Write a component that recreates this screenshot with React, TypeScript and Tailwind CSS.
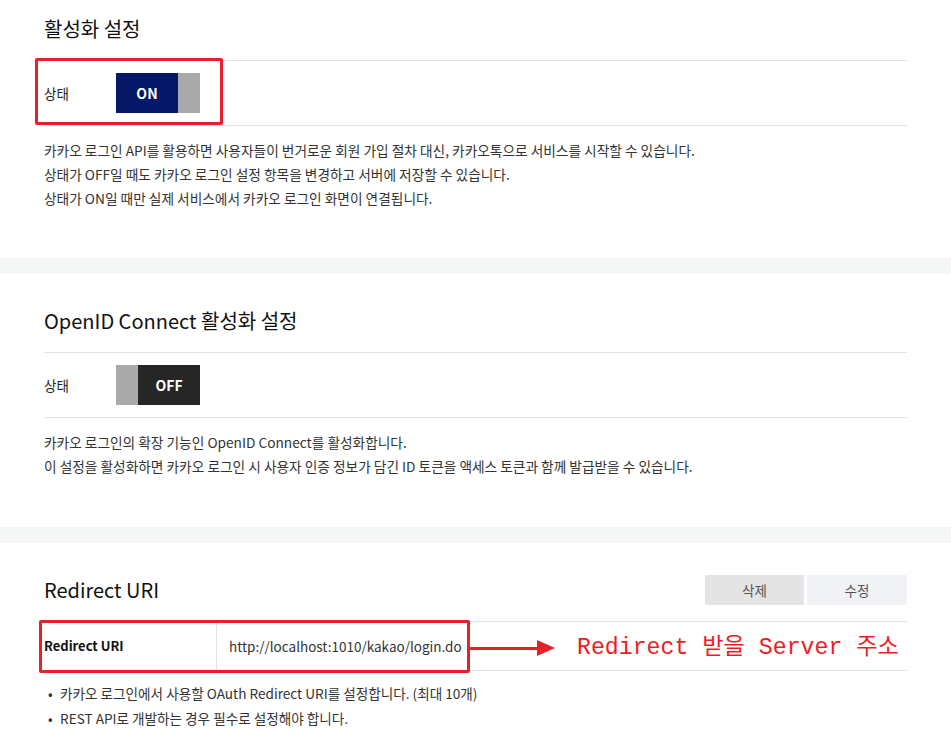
import React from 'react';

const font = { fontFamily: '"Noto Sans CJK KR", "Noto Sans", sans-serif' };

function Toggle({ on }: { on: boolean }) {
  if (on) {
    return (
      <div className="flex h-[40px] w-[84px]">
        <div className="flex w-[62px] items-center justify-center bg-[#051766] text-[14px] font-bold text-white">ON</div>
        <div className="w-[22px] bg-[#aaaaaa]" />
      </div>
    );
  }
  return (
    <div className="flex h-[40px] w-[84px]">
      <div className="w-[22px] bg-[#aaaaaa]" />
      <div className="flex w-[62px] items-center justify-center bg-[#262626] text-[14px] font-bold text-white">OFF</div>
    </div>
  );
}

function StatusRow({ on, marked }: { on: boolean; marked?: boolean }) {
  return (
    <div className="relative flex h-[66px] items-center border-y border-[#e2e2e2]">
      <div className="w-[72px] text-[13.5px] text-[#222]">상태</div>
      <Toggle on={on} />
      {marked && (
        <div className="absolute left-[-9px] top-[-3px] h-[67px] w-[188px] rounded-[2px] border-[3px] border-[#e8202a]" />
      )}
    </div>
  );
}

function Band() {
  return <div className="h-[16px] bg-[#f5f6f6]" />;
}

export default function App() {
  return (
    <div className="w-[951px] bg-white text-[#333]" style={font}>
      <section className="px-[44px] pb-[48px] pt-[14px]">
        <h2 className="mb-[16px] h-[30px] text-[20px] leading-[30px] text-[#111]">활성화 설정</h2>
        <StatusRow on marked />
        <div className="mt-[12px] text-[13.7px] leading-[24px] text-[#333]">
          <p>카카오 로그인 API를 활용하면 사용자들이 번거로운 회원 가입 절차 대신, 카카오톡으로 서비스를 시작할 수 있습니다.</p>
          <p>상태가 OFF일 때도 카카오 로그인 설정 항목을 변경하고 서버에 저장할 수 있습니다.</p>
          <p>상태가 ON일 때만 실제 서비스에서 카카오 로그인 화면이 연결됩니다.</p>
        </div>
      </section>
      <Band />
      <section className="px-[44px] pb-[49px] pt-[32px]">
        <h2 className="mb-[16px] h-[30px] text-[20px] leading-[30px] text-[#111]">OpenID Connect 활성화 설정</h2>
        <StatusRow on={false} />
        <div className="mt-[12px] text-[13.7px] leading-[24px] text-[#333]">
          <p>카카오 로그인의 확장 기능인 OpenID Connect를 활성화합니다.</p>
          <p>이 설정을 활성화하면 카카오 로그인 시 사용자 인증 정보가 담긴 ID 토큰을 액세스 토큰과 함께 발급받을 수 있습니다.</p>
        </div>
      </section>
      <Band />
      <section className="px-[44px] pb-[20px] pt-[32px]">
        <div className="mb-[16px] flex h-[30px] items-center justify-between">
          <h2 className="text-[20px] leading-[30px] text-[#111]">Redirect URI</h2>
          <div className="flex gap-[3px] text-[13.5px] text-[#555]">
            <button className="h-[30px] w-[99px] bg-[#e4e4e4]">삭제</button>
            <button className="h-[30px] w-[100px] bg-[#f0f2f6]">수정</button>
          </div>
        </div>
        <div className="relative flex h-[50px] items-center border-y border-[#e2e2e2]">
          <div className="flex h-full w-[173px] items-center border-r border-[#e2e2e2] text-[13px] font-bold text-[#111]">Redirect URI</div>
          <div className="pl-[12px] text-[13.5px] text-[#333]">http://localhost:1010/kakao/login.do</div>
          <div className="absolute left-[-5px] top-[-2px] h-[53px] w-[431px] rounded-[2px] border-[3px] border-[#e8202a]" />
          <div className="absolute left-[425px] top-[18px] flex items-center">
            <div className="h-[3px] w-[68px] bg-[#e8202a]" />
            <svg width="18" height="16" viewBox="0 0 18 16">
              <path d="M0 0 L18 8 L0 16 Z" fill="#e8202a" />
            </svg>
          </div>
          <div
            className="absolute left-[533px] top-[11px] text-[23.2px] leading-[30px] text-[#ee1c25]"
            style={{ fontFamily: '"Liberation Mono", "Noto Sans CJK KR", monospace' }}
          >
            Redirect 받을 Server 주소
          </div>
        </div>
        <ul className="mt-[10px] text-[13.6px] leading-[25px] text-[#333]">
          <li className="flex"><span className="w-[16px] pl-[4px]">•</span>카카오 로그인에서 사용할 OAuth Redirect URI를 설정합니다. (최대 10개)</li>
          <li className="flex"><span className="w-[16px] pl-[4px]">•</span>REST API로 개발하는 경우 필수로 설정해야 합니다.</li>
        </ul>
      </section>
    </div>
  );
}
